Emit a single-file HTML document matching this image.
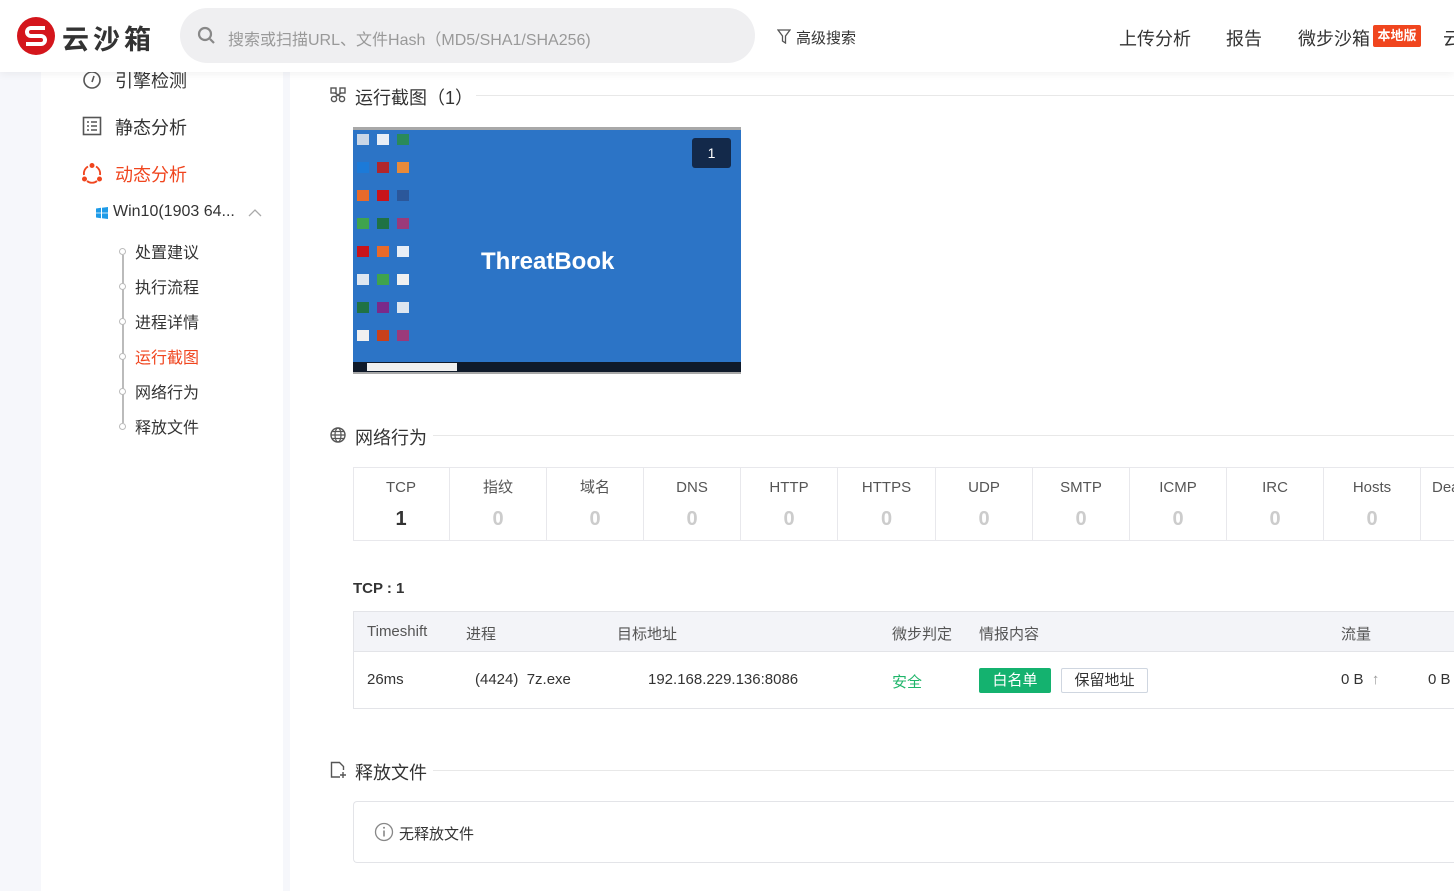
<!DOCTYPE html>
<html><head><meta charset="utf-8"><style>
*{margin:0;padding:0;box-sizing:border-box}
body{width:1454px;height:891px;overflow:hidden;background:#f6f7fb;font-family:"Liberation Sans","Noto Sans CJK SC",sans-serif;color:#333;position:relative}
.a{position:absolute}
.hdr{left:0;top:0;width:1454px;height:72px;background:#fff;box-shadow:0 2px 8px rgba(0,0,0,.06);z-index:5}
.side{left:41px;top:72px;width:242px;height:819px;background:#fff}
.main{left:290px;top:72px;width:1164px;height:819px;background:#fff}
.t{white-space:nowrap}
.sec{font-size:18px;color:#333}
.line{height:1px;background:#e8e8e8}
.cell{position:absolute;top:467px;width:97px;height:74px;border-right:1px solid #e8e8ec;text-align:center}
.cell .n{font-size:15px;color:#555;position:absolute;top:12px;left:0;width:100%;line-height:18px;height:18px}
.cell .v{font-size:20px;font-weight:bold;color:#ccc;position:absolute;top:40px;left:0;width:100%;line-height:24px}
.dot{position:absolute;left:119px;width:7px;height:7px;border:1px solid #bbb;border-radius:50%;background:#fff}
.ic{position:absolute;width:12px;height:11px}
</style></head><body>
<div class="a hdr">
 <svg class="a" style="left:16px;top:16px" width="40" height="40" viewBox="0 0 40 40"><circle cx="20" cy="20" r="19" fill="#d4161c"/><path d="M29 12H15a4 4 0 0 0 0 8h10a4 4 0 0 1 0 8H10" stroke="#fff" stroke-width="4" fill="none"/></svg>
 <div class="a t" style="left:62px;top:18px;font-size:27px;font-weight:bold;color:#333;letter-spacing:4px">云沙箱</div>
 <div class="a" style="left:180px;top:8px;width:575px;height:55px;border-radius:28px;background:#efeff1"></div>
 <svg class="a" style="left:197px;top:26px" width="20" height="20" viewBox="0 0 20 20"><circle cx="8" cy="8" r="6" stroke="#888" stroke-width="2.2" fill="none"/><path d="M13 13l4 4" stroke="#888" stroke-width="2.2"/></svg>
 <div class="a t" style="left:228px;top:26px;font-size:16px;color:#999">搜索或扫描URL、文件Hash（MD5/SHA1/SHA256)</div>
 <svg class="a" style="left:777px;top:29px" width="14" height="15" viewBox="0 0 14 15"><path d="M1 1h12L8.5 7v7L5.5 12V7z" stroke="#555" stroke-width="1.3" fill="none"/></svg>
 <div class="a t" style="left:796px;top:27px;font-size:15px;color:#333">高级搜索</div>
 <div class="a t" style="left:1119px;top:25px;font-size:18px;color:#333">上传分析</div>
 <div class="a t" style="left:1226px;top:25px;font-size:18px;color:#333">报告</div>
 <div class="a t" style="left:1298px;top:25px;font-size:18px;color:#333">微步沙箱</div>
 <div class="a t" style="left:1373px;top:25px;width:48px;height:22px;background:#f0451e;color:#fff;font-size:13px;font-weight:bold;text-align:center;line-height:22px;border-radius:2px">本地版</div>
 <div class="a t" style="left:1443px;top:25px;font-size:18px;color:#333">云</div>
</div>
<div class="a side"></div>
<div class="a main"></div>
<!-- sidebar -->
<svg class="a" style="left:82px;top:70px" width="20" height="20" viewBox="0 0 20 20"><circle cx="10" cy="10" r="8" stroke="#555" stroke-width="1.6" fill="none"/><path d="M12 6l-2 6" stroke="#555" stroke-width="1.6"/></svg>
<div class="a t" style="left:115px;top:67px;font-size:18px;color:#333">引擎检测</div>
<svg class="a" style="left:82px;top:116px" width="20" height="20" viewBox="0 0 20 20"><rect x="1.5" y="1.5" width="17" height="17" stroke="#555" stroke-width="1.6" fill="none"/><path d="M5 6h2M9 6h6M5 10h2M9 10h6M5 14h2M9 14h6" stroke="#555" stroke-width="1.5"/></svg>
<div class="a t" style="left:115px;top:114px;font-size:18px;color:#333">静态分析</div>
<svg class="a" style="left:81px;top:162px" width="22" height="22" viewBox="0 0 22 22"><path d="M7 4.5A8 8 0 0 0 3 13M15 4.5A8 8 0 0 1 19 13M6 19a8 8 0 0 0 10 0" stroke="#f0451e" stroke-width="1.8" fill="none"/><circle cx="11" cy="3.5" r="2.5" fill="#f0451e"/><circle cx="3.5" cy="17" r="2.5" fill="#f0451e"/><circle cx="18.5" cy="17" r="2.5" fill="#f0451e"/></svg>
<div class="a t" style="left:115px;top:161px;font-size:18px;color:#f0451e">动态分析</div>
<svg class="a" style="left:96px;top:207px" width="12" height="12" viewBox="0 0 12 12"><path d="M0 1.5l5-.7v4.8H0zM6 .7L12 0v5.6H6zM0 6.4h5v4.8L0 10.5zM6 6.4h6V12l-6-.8z" fill="#1e9be8"/></svg>
<div class="a t" style="left:113px;top:203px;font-size:16px;color:#333">Win10(1903 64...</div>
<svg class="a" style="left:248px;top:208px" width="14" height="9" viewBox="0 0 14 9"><path d="M1 8l6-6 6 6" stroke="#aaa" stroke-width="1.3" fill="none"/></svg>
<div class="a" style="left:122px;top:255px;width:2px;height:168px;background:#bbb"></div>
<div class="a t" style="left:135px;top:236px;font-size:16px;color:#333;line-height:35px">处置建议<br>执行流程<br>进程详情<br><span style="color:#f0451e">运行截图</span><br>网络行为<br>释放文件</div>
<div class="dot" style="top:248px"></div><div class="dot" style="top:283px"></div><div class="dot" style="top:318px"></div><div class="dot" style="top:353px"></div><div class="dot" style="top:388px"></div><div class="dot" style="top:423px"></div>
<!-- screenshot section -->
<svg class="a" style="left:330px;top:87px" width="16" height="16" viewBox="0 0 16 16"><rect x="1" y="1" width="5" height="5" stroke="#555" fill="none" stroke-width="1.4"/><rect x="10" y="1" width="5" height="5" stroke="#555" fill="none" stroke-width="1.4"/><circle cx="4" cy="12" r="2.6" stroke="#555" fill="none" stroke-width="1.4"/><circle cx="12" cy="12" r="2.6" stroke="#555" fill="none" stroke-width="1.4"/><path d="M5 6l6 4M11 6l-6 4" stroke="#555" stroke-width="1.4"/></svg>
<div class="a t sec" style="left:355px;top:84px">运行截图（1）</div>
<div class="a line" style="left:476px;top:95px;width:978px"></div>
<div class="a" style="left:353px;top:127px;width:388px;height:247px;background:#2c74c6;border-top:3px solid #a8a8a8;border-bottom:2px solid #a8a8a8">
 <div class="a" style="left:339px;top:8px;width:39px;height:30px;background:#13294a;border-radius:3px;color:#fff;font-size:14px;text-align:center;line-height:30px">1</div>
 <div class="a t" style="left:128px;top:118px;color:#fff;font-size:24px;font-weight:bold">ThreatBook</div>
 <div class="a" style="left:0;top:232px;width:388px;height:10px;background:#0f1a2a"></div>
 <div class="a" style="left:14px;top:233px;width:90px;height:8px;background:#f0f0f0"></div>
 <div class="ic" style="left:4px;top:4px;background:#c9d6e6"></div><div class="ic" style="left:24px;top:4px;background:#e8eef6"></div><div class="ic" style="left:44px;top:4px;background:#2a8a5a"></div>
 <div class="ic" style="left:4px;top:32px;background:#1c7ad8"></div><div class="ic" style="left:24px;top:32px;background:#b0262b"></div><div class="ic" style="left:44px;top:32px;background:#e88a3a"></div>
 <div class="ic" style="left:4px;top:60px;background:#e86a2a"></div><div class="ic" style="left:24px;top:60px;background:#c8141a"></div><div class="ic" style="left:44px;top:60px;background:#2b579a"></div>
 <div class="ic" style="left:4px;top:88px;background:#3fa34d"></div><div class="ic" style="left:24px;top:88px;background:#1f7244"></div><div class="ic" style="left:44px;top:88px;background:#9b3a7a"></div>
 <div class="ic" style="left:4px;top:116px;background:#c8141a"></div><div class="ic" style="left:24px;top:116px;background:#e86a2a"></div><div class="ic" style="left:44px;top:116px;background:#e8eef6"></div>
 <div class="ic" style="left:4px;top:144px;background:#dde6f0"></div><div class="ic" style="left:24px;top:144px;background:#3fa34d"></div><div class="ic" style="left:44px;top:144px;background:#f0f0f0"></div>
 <div class="ic" style="left:4px;top:172px;background:#1f7244"></div><div class="ic" style="left:24px;top:172px;background:#7a2a8a"></div><div class="ic" style="left:44px;top:172px;background:#dde6f0"></div>
 <div class="ic" style="left:4px;top:200px;background:#f0f0f0"></div><div class="ic" style="left:24px;top:200px;background:#c8401a"></div><div class="ic" style="left:44px;top:200px;background:#9b3a7a"></div>
</div>
<!-- network -->
<svg class="a" style="left:330px;top:427px" width="16" height="16" viewBox="0 0 16 16"><circle cx="8" cy="8" r="7" stroke="#555" fill="none" stroke-width="1.4"/><ellipse cx="8" cy="8" rx="3" ry="7" stroke="#555" fill="none" stroke-width="1.2"/><path d="M1 8h14M2.5 4.5h11M2.5 11.5h11" stroke="#555" stroke-width="1.2"/></svg>
<div class="a t sec" style="left:355px;top:424px">网络行为</div>
<div class="a line" style="left:433px;top:435px;width:1021px"></div>
<div class="a" style="left:353px;top:467px;width:1101px;height:74px;border:1px solid #e8e8ec;border-right:none"></div>
<div class="cell" style="left:353px"><div class="n">TCP</div><div class="v" style="color:#333">1</div></div>
<div class="cell" style="left:450px"><div class="n">指纹</div><div class="v">0</div></div>
<div class="cell" style="left:547px"><div class="n">域名</div><div class="v">0</div></div>
<div class="cell" style="left:644px"><div class="n">DNS</div><div class="v">0</div></div>
<div class="cell" style="left:741px"><div class="n">HTTP</div><div class="v">0</div></div>
<div class="cell" style="left:838px;width:98px"><div class="n">HTTPS</div><div class="v">0</div></div>
<div class="cell" style="left:936px"><div class="n">UDP</div><div class="v">0</div></div>
<div class="cell" style="left:1033px"><div class="n">SMTP</div><div class="v">0</div></div>
<div class="cell" style="left:1130px"><div class="n">ICMP</div><div class="v">0</div></div>
<div class="cell" style="left:1227px"><div class="n">IRC</div><div class="v">0</div></div>
<div class="cell" style="left:1324px"><div class="n">Hosts</div><div class="v">0</div></div>
<div class="cell" style="left:1421px;text-align:left"><div class="n" style="left:11px">Dea</div></div>
<div class="a t" style="left:353px;top:580px;font-size:15px;font-weight:bold;color:#333">TCP : 1</div>
<div class="a" style="left:353px;top:611px;width:1101px;height:98px;border:1px solid #e3e4e8;border-right:none"></div>
<div class="a" style="left:354px;top:612px;width:1100px;height:40px;background:#f3f4f8;border-bottom:1px solid #e3e4e8"></div>
<div class="a t" style="left:367px;top:623px;font-size:15px;color:#555">Timeshift</div>
<div class="a t" style="left:466px;top:623px;font-size:15px;color:#555">进程</div>
<div class="a t" style="left:617px;top:623px;font-size:15px;color:#555">目标地址</div>
<div class="a t" style="left:892px;top:623px;font-size:15px;color:#555">微步判定</div>
<div class="a t" style="left:979px;top:623px;font-size:15px;color:#555">情报内容</div>
<div class="a t" style="left:1341px;top:623px;font-size:15px;color:#555">流量</div>
<div class="a t" style="left:367px;top:671px;font-size:15px;color:#333">26ms</div>
<div class="a t" style="left:475px;top:671px;font-size:15px;color:#333">(4424)&nbsp; 7z.exe</div>
<div class="a t" style="left:648px;top:671px;font-size:15px;color:#333">192.168.229.136:8086</div>
<div class="a t" style="left:892px;top:671px;font-size:15px;color:#1fb56a">安全</div>
<div class="a t" style="left:979px;top:668px;width:72px;height:25px;background:#14b26f;color:#fff;font-size:15px;text-align:center;line-height:25px;border-radius:2px">白名单</div>
<div class="a t" style="left:1061px;top:668px;width:87px;height:25px;border:1px solid #cfd6e0;color:#333;font-size:15px;text-align:center;line-height:23px;border-radius:2px">保留地址</div>
<div class="a t" style="left:1341px;top:671px;font-size:15px;color:#333">0 B&nbsp; <span style="color:#999">↑</span></div>
<div class="a t" style="left:1428px;top:671px;font-size:15px;color:#333">0 B</div>
<!-- released -->
<svg class="a" style="left:330px;top:761px" width="17" height="18" viewBox="0 0 17 18"><path d="M10 16H1.5V1.5h8l4 4V9" stroke="#555" fill="none" stroke-width="1.4"/><path d="M13 11v6M10 14h6" stroke="#555" stroke-width="1.4"/></svg>
<div class="a t sec" style="left:355px;top:759px">释放文件</div>
<div class="a line" style="left:433px;top:770px;width:1021px"></div>
<div class="a" style="left:353px;top:801px;width:1101px;height:62px;border:1px solid #e3e4e8;border-right:none;border-radius:4px 0 0 4px"></div>
<svg class="a" style="left:374px;top:822px" width="20" height="20" viewBox="0 0 20 20"><circle cx="10" cy="10" r="8.5" stroke="#888" fill="none" stroke-width="1.3"/><path d="M10 8.5v6" stroke="#888" stroke-width="1.6"/><circle cx="10" cy="5.8" r="1" fill="#888"/></svg>
<div class="a t" style="left:399px;top:823px;font-size:15px;color:#333">无释放文件</div>
</body></html>
